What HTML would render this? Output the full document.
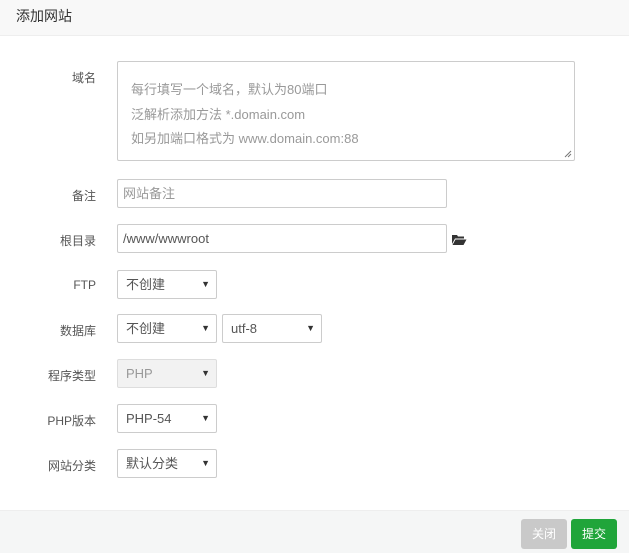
<!DOCTYPE html>
<html><head><meta charset="utf-8"><style>
*{box-sizing:border-box;margin:0;padding:0}
body{width:629px;height:553px;background:#fff;font-family:"Liberation Sans","Noto Sans CJK SC",sans-serif;font-size:12px;color:#555;position:relative;overflow:hidden}
.hd{position:absolute;left:0;top:0;width:629px;height:36px;background:#f8f8f8;border-bottom:1px solid #eee;font-size:14px;color:#333;line-height:33px;padding-left:16px}
.lb{position:absolute;right:533px;font-size:12px;color:#555;white-space:nowrap}
.box{position:absolute;left:117px;border:1px solid #ccc;border-radius:2px;background:#fff;font-size:13px;color:#555;padding-left:8px;line-height:27px;height:29px}
.sel{width:100px}
.sel:after{content:"▼";position:absolute;right:6px;top:0;font-size:9px;color:#333}
.ph{color:#999}
.ft{position:absolute;left:0;top:510px;width:629px;height:43px;background:#f5f6f6;border-top:1px solid #eee}
.btn{position:absolute;top:519px;height:30px;width:46px;border-radius:3px;color:#fff;font-size:12px;line-height:30px;text-align:center}
</style></head><body>
<div class="hd">添加网站</div>

<div class="lb" style="top:69px">域名</div>
<div class="box" style="top:61px;width:458px;height:100px;padding:16px 0 0 13px;line-height:24.5px;color:#999">每行填写一个域名，默认为80端口<br>泛解析添加方法 *.domain.com<br>如另加端口格式为 www.domain.com:88
<svg style="position:absolute;right:2px;bottom:2px" width="8" height="8"><path d="M1 7L7 1M4 7L7 4" stroke="#777" stroke-width="1"/></svg></div>

<div class="lb" style="top:187px">备注</div>
<div class="box ph" style="top:179px;width:330px;padding-left:5px">网站备注</div>

<div class="lb" style="top:232px">根目录</div>
<div class="box" style="top:224px;width:330px;padding-left:5px">/www/wwwroot</div>
<svg style="position:absolute;left:451px;top:234px" width="16" height="12" viewBox="0 0 16 12"><path d="M1 1h5l1 1.5h6v2H4L1 10z" fill="#333"/><path d="M4.5 5.5H15.5L12.5 11H1.5z" fill="#333"/></svg>

<div class="lb" style="top:278px">FTP</div>
<div class="box sel" style="top:270px">不创建</div>

<div class="lb" style="top:322px">数据库</div>
<div class="box sel" style="top:314px">不创建</div>
<div class="box sel" style="top:314px;left:222px">utf-8</div>

<div class="lb" style="top:367px">程序类型</div>
<div class="box sel" style="top:359px;background:#f2f2f2;color:#999;border-color:#ddd">PHP</div>
<style>.dis:after{color:#aaa}</style>

<div class="lb" style="top:412px">PHP版本</div>
<div class="box sel" style="top:404px">PHP-54</div>

<div class="lb" style="top:457px">网站分类</div>
<div class="box sel" style="top:449px">默认分类</div>

<div class="ft"></div>
<div class="btn" style="left:521px;background:#c9c9c9">关闭</div>
<div class="btn" style="left:571px;background:#20a53a">提交</div>
</body></html>
